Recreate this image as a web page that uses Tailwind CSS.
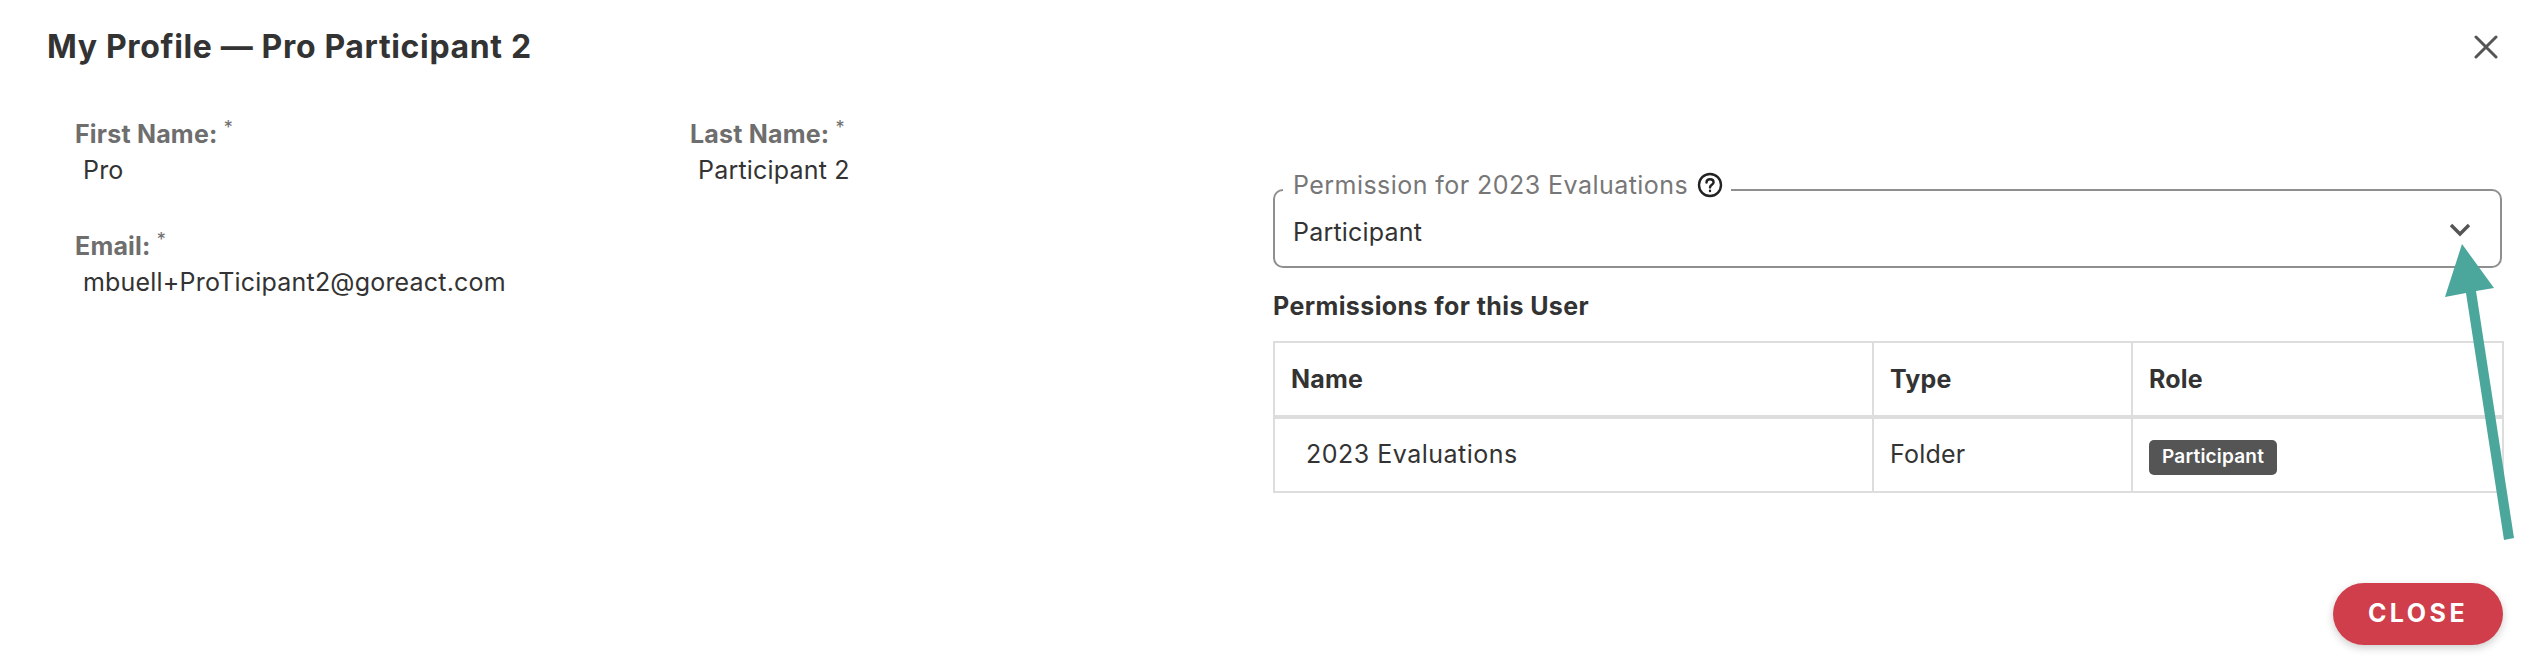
<!DOCTYPE html>
<html lang="en">
  <head>
    <meta charset="UTF-8" />
    <title>My Profile</title>
    <script src="https://cdn.jsdelivr.net/npm/@tailwindcss/browser@4"></script>
  </head>
  <body class="bg-white [font-family:Inter,sans-serif] text-[#333]">
    <div class="relative w-[2546px] h-[672px] overflow-hidden">
      <!-- header -->
      <div class="flex items-center justify-between pl-[47px] pr-[48px] pt-[27px]">
        <h1 class="text-[32px] leading-[40px] font-bold tracking-[0.65px]">My Profile — Pro Participant 2</h1>
        <svg class="w-[24px] h-[24px] text-[#555]" viewBox="0 0 24 24" fill="none" stroke="currentColor" stroke-width="3" stroke-linecap="round">
          <path d="M2 2 L22 22 M22 2 L2 22" />
        </svg>
      </div>

      <div class="flex">
        <!-- left: user details -->
        <div class="w-[1273px] pl-[75px] pt-[52px] shrink-0 text-[25px] tracking-[0.2px]">
          <div class="flex">
            <div class="w-[615px]">
              <div class="leading-[30px] font-bold text-[#6e6e6e]">First Name: <sup class="text-[18px] font-normal">*</sup></div>
              <div class="leading-[30px] mt-[6px] pl-[8px]">Pro</div>
            </div>
            <div>
              <div class="leading-[30px] font-bold text-[#6e6e6e]">Last Name: <sup class="text-[18px] font-normal">*</sup></div>
              <div class="leading-[30px] mt-[6px] pl-[8px]">Participant 2</div>
            </div>
          </div>
          <div class="mt-[46px]">
            <div class="leading-[30px] font-bold text-[#6e6e6e]">Email: <sup class="text-[18px] font-normal">*</sup></div>
            <div class="leading-[30px] mt-[6px] pl-[8px]">mbuell+ProTicipant2@goreact.com</div>
          </div>
        </div>

        <!-- right: permissions -->
        <div class="w-[1229px] pt-[105px] shrink-0 text-[25px] tracking-[0.2px]">
          <fieldset class="border-2 border-[#8f8f8f] rounded-[10px] h-[96px] pl-[8px] pr-[29px]">
            <legend class="flex items-center gap-[9px] pl-[10px] pr-[8px] pb-[10px] leading-[26px] text-[#777] tracking-[0.45px]">
              Permission for 2023 Evaluations
              <svg class="w-[26px] h-[26px] text-[#222]" viewBox="0 0 26 26" fill="none" stroke="currentColor" stroke-width="2.4" stroke-linecap="round">
                <circle cx="13" cy="13" r="11" />
                <path d="M9.5 10.5 C9.5 8.3 11 7.2 13 7.2 C15 7.2 16.6 8.4 16.6 10.3 C16.6 12.6 13 13 13 15.4" />
                <path d="M13 18.8 L13 19" />
              </svg>
            </legend>
            <div class="flex items-center justify-between h-[48px] pl-[10px]">
              <span class="leading-[30px]">Participant</span>
              <svg class="w-[22px] h-[14px] text-[#555] mb-[5px]" viewBox="0 0 22 14" fill="none" stroke="currentColor" stroke-width="3.4">
                <path d="M2 2 L11 11 L20 2" />
              </svg>
            </div>
          </fieldset>

          <h2 class="leading-[30px] font-bold mt-[23px] tracking-[0.4px]">Permissions for this User</h2>

          <table class="w-[1229px] table-fixed border-collapse mt-[20px]">
            <colgroup>
              <col class="w-[599px]" />
              <col class="w-[259px]" />
              <col class="w-[371px]" />
            </colgroup>
            <thead>
              <tr class="h-[75px]">
                <th class="border-2 border-b-4 border-[#ddd] pl-[16px] pt-[2px] text-left font-bold">Name</th>
                <th class="border-2 border-b-4 border-[#ddd] pl-[16px] pt-[2px] text-left font-bold">Type</th>
                <th class="border-2 border-b-4 border-[#ddd] pl-[16px] pt-[2px] text-left font-bold">Role</th>
              </tr>
            </thead>
            <tbody>
              <tr class="h-[75px]">
                <td class="border-2 border-[#ddd] pl-[31px] tracking-[0.5px]">2023 Evaluations</td>
                <td class="border-2 border-[#ddd] pl-[16px]">Folder</td>
                <td class="border-2 border-[#ddd] pl-[16px]">
                  <span class="inline-flex items-center h-[35px] mt-[3px] px-[13px] rounded-[5px] bg-[#555] text-white text-[19px] font-semibold align-middle">Participant</span>
                </td>
              </tr>
            </tbody>
          </table>
        </div>
      </div>

      <!-- footer -->
      <div class="flex justify-end pr-[43px] mt-[90px]">
        <button class="w-[170px] h-[62px] rounded-full bg-[#cf3e4a] text-white text-[25px] font-bold tracking-[3.5px] shadow-[0_3px_8px_rgba(0,0,0,0.2)]">CLOSE</button>
      </div>

      <!-- annotation arrow drawn on top of the screenshot -->
      <svg class="absolute left-0 top-0 w-[2546px] h-[672px] pointer-events-none" viewBox="0 0 2546 672">
        <polygon fill="#4ba69b" points="2462,244 2494,288 2476,291 2514,538 2504,540 2466,293 2445,297" />
      </svg>
    </div>
  </body>
</html>
